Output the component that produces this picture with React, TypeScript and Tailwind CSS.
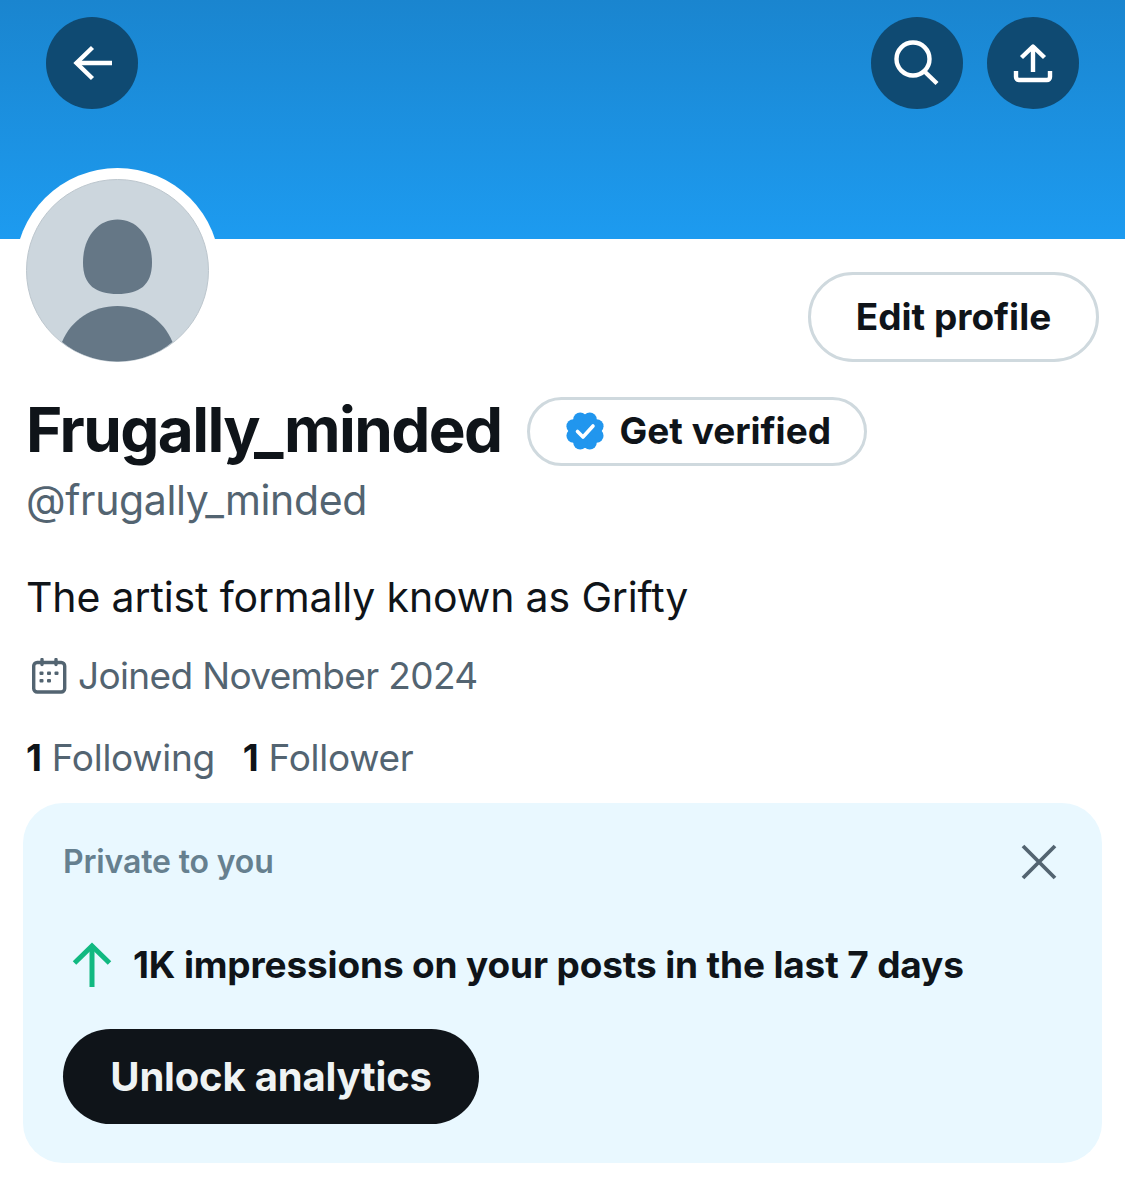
const font = { fontFamily: "Inter, 'Liberation Sans', sans-serif" };

function CircleButton({ children }: { children: React.ReactNode }) {
  return (
    <button className="flex h-[92px] w-[92px] items-center justify-center rounded-full bg-[#0f4a72] text-white">
      {children}
    </button>
  );
}

function BackIcon() {
  return (
    <svg width="46" height="46" viewBox="0 0 46 46" fill="none" stroke="white" strokeWidth="4.400">
      <path d="M43 23H9" />
      <path d="M23.500 7.500L7.500 23l16 15.500" />
    </svg>
  );
}

function SearchIcon() {
  return (
    <svg width="48" height="48" viewBox="0 0 48 48" fill="none" stroke="white" strokeWidth="4.400">
      <circle cx="20" cy="20" r="16.500" />
      <path d="M31 32l13 12.500" />
    </svg>
  );
}

function ShareIcon() {
  return (
    <svg width="44" height="44" viewBox="0 0 44 44" fill="none" stroke="white" strokeWidth="4.400" strokeLinejoin="round">
      <path d="M22 31V6M10.500 16.500L22 5.500l11.500 11" />
      <path d="M5 30v6a3 3 0 0 0 3 3h28a3 3 0 0 0 3-3v-6" />
    </svg>
  );
}

function CloseIcon() {
  return (
    <svg width="46" height="46" viewBox="0 0 46 46" fill="none" stroke="#536471" strokeWidth="3.800">
      <path d="M7 7l32 32M39 7L7 39" />
    </svg>
  );
}

function GreenArrow() {
  return (
    <svg width="46" height="46" viewBox="0 0 46 46" fill="none" stroke="#11b981" strokeWidth="5">
      <path d="M23 45V5" />
      <path d="M5.500 21L23 4l17.500 17" />
    </svg>
  );
}

function CalendarIcon() {
  return (
    <svg width="36" height="36" viewBox="0 0 36 36" fill="none" className="text-[#536471]">
      <rect x="2.700" y="4.500" width="31" height="29.500" rx="3.500" stroke="currentColor" strokeWidth="3.400" />
      <path d="M11 1.500v5M25 1.500v5" stroke="currentColor" strokeWidth="3.400" strokeLinecap="round" />
      <g fill="currentColor">
        <rect x="8.500" y="13.500" width="4" height="3.600" rx="1" />
        <rect x="16" y="13.500" width="4" height="3.600" rx="1" />
        <rect x="23.500" y="13.500" width="4" height="3.600" rx="1" />
        <rect x="8.500" y="21" width="4" height="3.600" rx="1" />
        <rect x="16" y="21" width="4" height="3.600" rx="1" />
      </g>
    </svg>
  );
}

function VerifiedBadge() {
  // scalloped badge, 8 lobes
  const lobes = Array.from({ length: 8 }, (_, i) => {
    const a = (i * Math.PI) / 4 + Math.PI / 8;
    return { cx: 20 + 12.5 * Math.cos(a), cy: 20 + 12.5 * Math.sin(a) };
  });
  return (
    <svg width="40" height="40" viewBox="0 0 40 40">
      <circle cx="20" cy="20" r="15" fill="#2196ee" />
      {lobes.map((l, i) => (
        <circle key={i} cx={l.cx} cy={l.cy} r="7" fill="#2196ee" />
      ))}
      <path d="M12.500 20.500l5.500 5.500 10-11" fill="none" stroke="white" strokeWidth="3.600" strokeLinecap="round" strokeLinejoin="round" />
    </svg>
  );
}

function Avatar() {
  return (
    <div className="h-[205px] w-[205px] shrink-0 rounded-full bg-white pl-[11px] pt-[11px]">
      <svg width="183" height="183" viewBox="0 0 183 183">
        <defs>
          <clipPath id="avatar-clip">
            <circle cx="91.500" cy="91.500" r="91" />
          </clipPath>
        </defs>
        <circle cx="91.500" cy="91.500" r="91" fill="#ccd6dd" stroke="#bcc6cd" strokeWidth="1" />
        <g clipPath="url(#avatar-clip)" fill="#657786">
          <path d="M91.500 40.500c20 0 34.500 18 34.500 43 0 23-13 31.500-34.500 31.500S57 106.500 57 83.500c0-25 14.500-43 34.500-43z" />
          <path d="M36 163c9-22 30-36 55.500-36s46 14 55 36c-14 12-34 20-55 20s-41-8-55.500-20z" />
        </g>
      </svg>
    </div>
  );
}

export default function App() {
  return (
    <div className="min-h-[1200px] w-[1125px] bg-white" style={font}>
      {/* Banner */}
      <div className="flex h-[239px] items-start justify-between bg-gradient-to-b from-[#1a85cf] to-[#1d9bf0] pl-[46px] pr-[46px] pt-[17px]">
        <CircleButton>
          <BackIcon />
        </CircleButton>
        <div className="flex gap-[24px]">
          <CircleButton>
            <SearchIcon />
          </CircleButton>
          <CircleButton>
            <ShareIcon />
          </CircleButton>
        </div>
      </div>

      {/* Avatar + edit */}
      <div className="flex items-start justify-between pl-[15px] pr-[26px]">
        <div className="-mt-[71px]">
          <Avatar />
        </div>
        <button className="mt-[33px] flex h-[90px] w-[291px] items-center justify-center rounded-full border-[3px] border-[#cfd9de] text-[37px] font-bold text-[#0f1419]">
          Edit profile
        </button>
      </div>

      {/* Name */}
      <div className="mt-[23px] flex items-center pl-[26px]">
        <h1 className="mb-[2px] text-[62px] font-bold leading-[68px] tracking-[-1.6px] text-[#0f1419]">Frugally_minded</h1>
        <div className="ml-[25px] flex h-[69px] w-[340px] items-center rounded-full border-[3px] border-[#cfd9de] pl-[35px]">
          <VerifiedBadge />
          <span className="ml-[15px] text-[37px] font-bold text-[#0f1419]">Get verified</span>
        </div>
      </div>

      <div className="pl-[26px]">
        <p className="mt-[9px] text-[41px] leading-[50px] tracking-[-0.36px] text-[#536471]">@frugally_minded</p>
        <p className="mt-[47px] text-[41px] leading-[50px] tracking-[-0.14px] text-[#0f1419]">The artist formally known as Grifty</p>
        <div className="mt-[30px] flex items-center">
          <span className="ml-[5px]">
            <CalendarIcon />
          </span>
          <span className="ml-[11px] text-[37px] leading-[48px] tracking-[-0.65px] text-[#536471]">Joined November 2024</span>
        </div>
        <div className="mt-[34px] flex text-[37px] leading-[48px] tracking-[-0.3px] text-[#536471]">
          <span>
            <b className="font-bold text-[#0f1419]">1</b> Following
          </span>
          <span className="ml-[28px]">
            <b className="font-bold text-[#0f1419]">1</b> Follower
          </span>
        </div>
      </div>

      {/* Analytics card */}
      <div className="ml-[23px] mt-[21px] h-[360px] w-[1079px] rounded-[40px] bg-[#e9f8ff] pl-[40px] pr-[40px] pt-[36px]">
        <div className="flex items-center justify-between">
          <span className="text-[32px] font-semibold leading-[40px] tracking-[-0.15px] text-[#66808f]">Private to you</span>
          <CloseIcon />
        </div>
        <div className="mt-[56px] flex items-center">
          <span className="ml-[6px]">
            <GreenArrow />
          </span>
          <span className="ml-[18px] text-[37px] font-bold leading-[48px] tracking-[-0.15px] text-[#0f1419]">
            1K impressions on your posts in the last 7 days
          </span>
        </div>
        <button className="mt-[40px] flex h-[95px] w-[416px] items-center justify-center rounded-full bg-[#0f1419] text-[40px] font-bold tracking-[-0.2px] text-[#eff3f4]">
          Unlock analytics
        </button>
      </div>
    </div>
  );
}
